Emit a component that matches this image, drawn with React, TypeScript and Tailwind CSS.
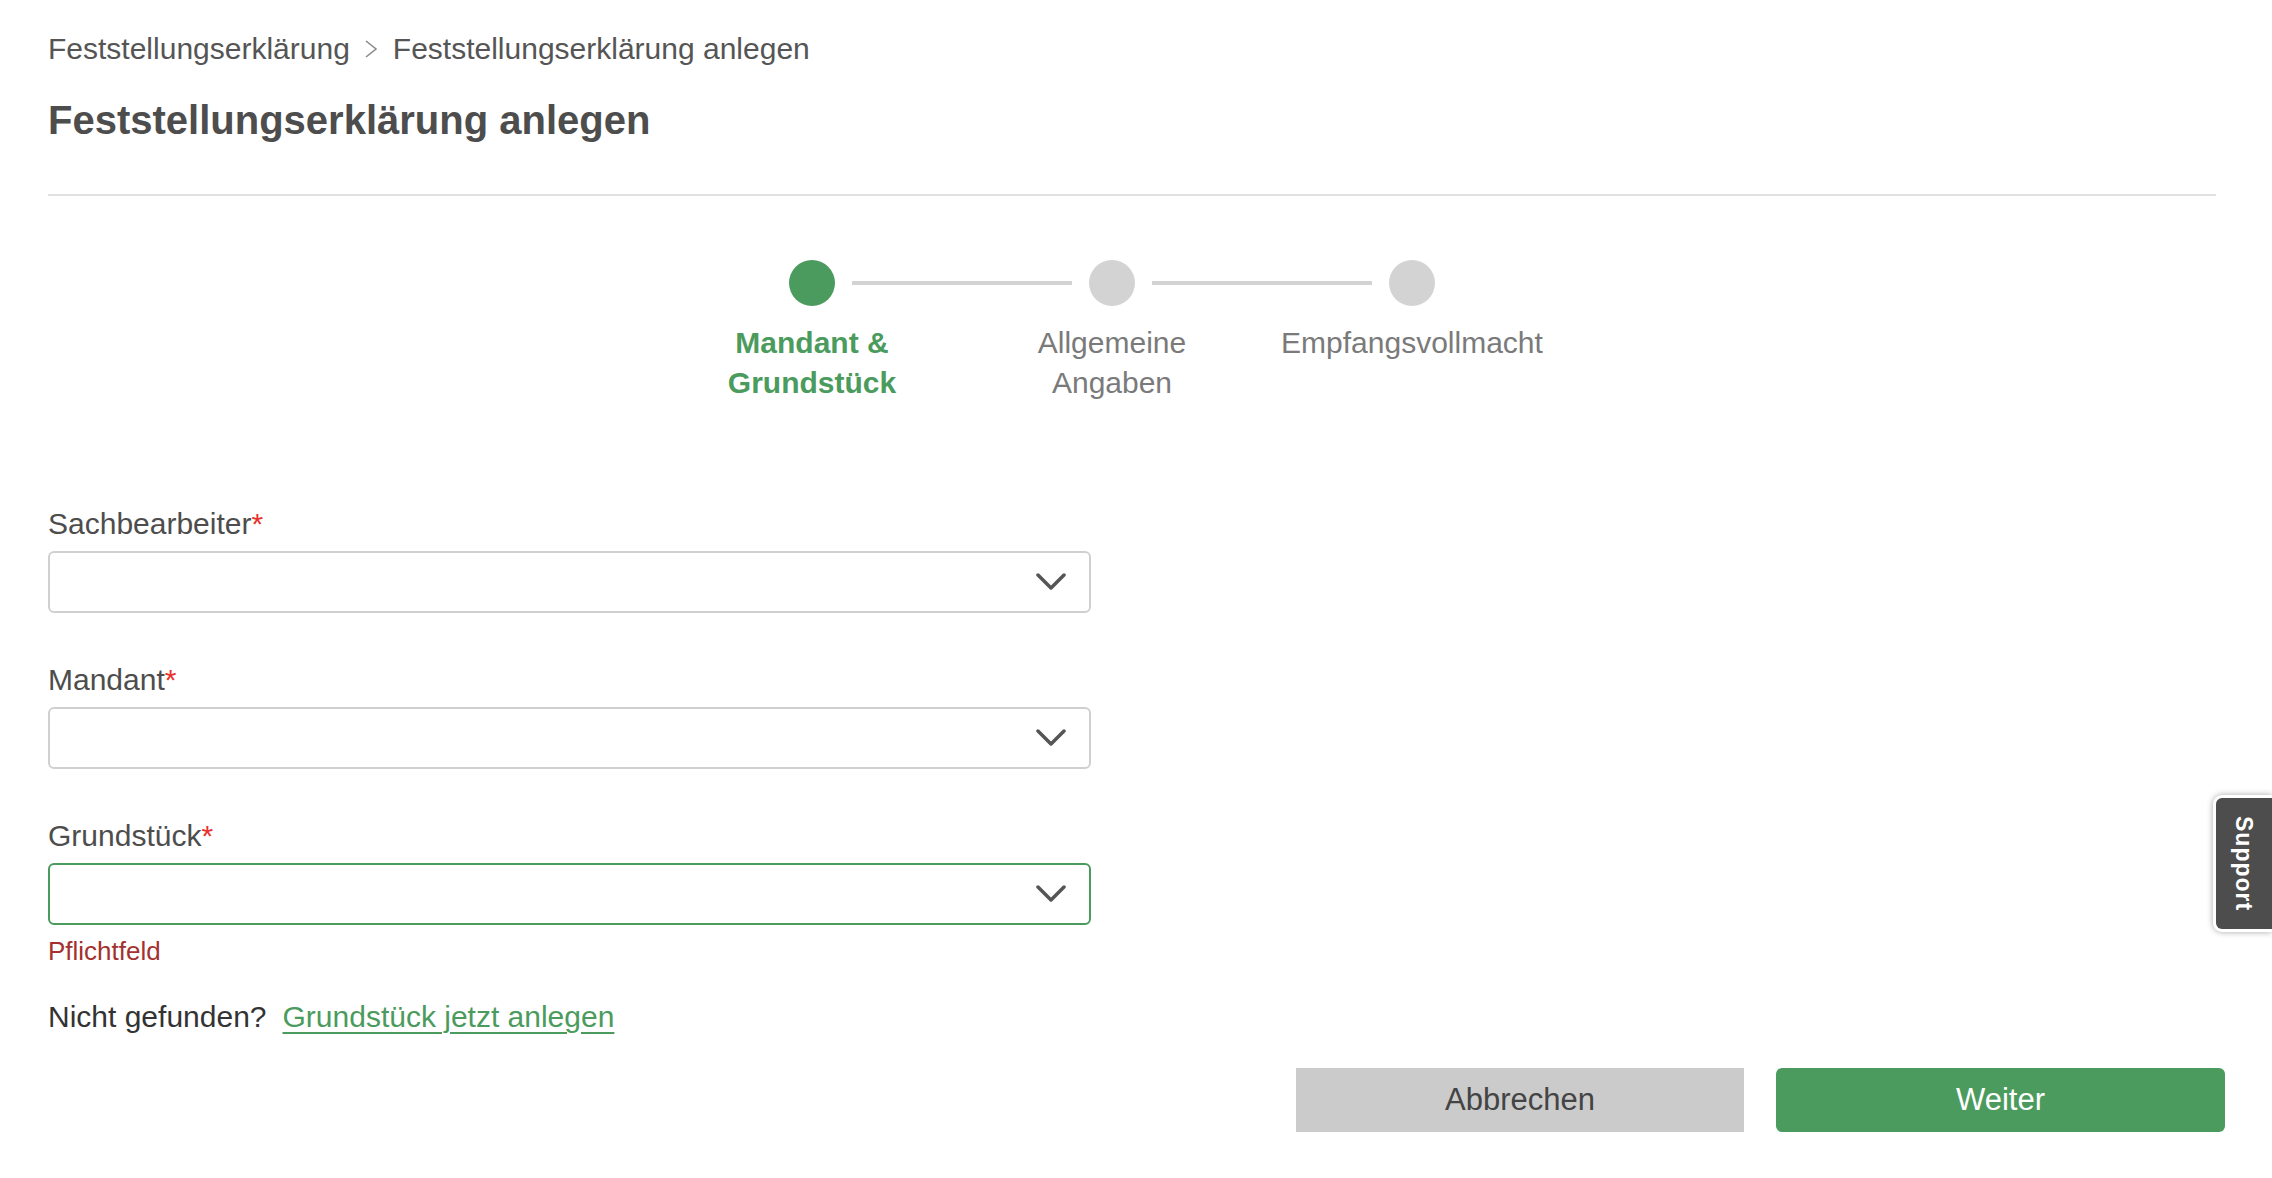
import React from "react";

const steps = [
  { label: "Mandant & Grundstück", active: true },
  { label: "Allgemeine Angaben", active: false },
  { label: "Empfangsvollmacht", active: false },
];

const fields = [
  { label: "Sachbearbeiter", focused: false, error: false },
  { label: "Mandant", focused: false, error: false },
  { label: "Grundstück", focused: true, error: true },
];

const Chevron = () => (
  <svg width="30" height="18" viewBox="0 0 30 18" fill="none">
    <path
      d="M2 2 L15 15 L28 2"
      stroke="#555555"
      strokeWidth="3.5"
      strokeLinecap="round"
      strokeLinejoin="round"
    />
  </svg>
);

const SelectField = ({
  label,
  focused,
  error,
}: {
  label: string;
  focused: boolean;
  error: boolean;
}) => (
  <div className="flex flex-col">
    <label className="h-[40px] text-[30px] leading-[40px] text-[#4d4d4d]">
      {label}
      <span className="text-[#e8322a]">*</span>
    </label>
    <div
      className={
        focused
          ? "mt-[7px] flex h-[62px] w-[1043px] items-center justify-end rounded-[6px] border-2 border-[#4b9b5e] bg-white pr-[23px]"
          : "mt-[7px] flex h-[62px] w-[1043px] items-center justify-end rounded-[6px] border-2 border-[#d0d0d0] bg-white pr-[23px]"
      }
    >
      <Chevron />
    </div>
    {error && (
      <p className="mt-[10px] text-[26px] leading-[32px] text-[#a3312f]">
        Pflichtfeld
      </p>
    )}
  </div>
);

const Stepper = () => (
  <div className="flex flex-col">
    <div className="mt-[64px] flex items-center pl-[741px]">
      {steps.map((step, i) => (
        <React.Fragment key={step.label}>
          <div
            className={
              step.active
                ? "h-[46px] w-[46px] shrink-0 rounded-full bg-[#4b9b5e]"
                : "h-[46px] w-[46px] shrink-0 rounded-full bg-[#d3d3d3]"
            }
          />
          {i < steps.length - 1 && (
            <div className="mx-[17px] h-[4px] w-[220px] bg-[#d3d3d3]" />
          )}
        </React.Fragment>
      ))}
    </div>
    <div className="mt-[17px] flex pl-[614px]">
      {steps.map((step) => (
        <div key={step.label} className="flex w-[300px] justify-center">
          <span
            className={
              step.active
                ? "max-w-[270px] text-center text-[30px] font-bold leading-[40px] text-[#4b9b5e]"
                : "max-w-[270px] text-center text-[30px] leading-[40px] text-[#7a7a7a]"
            }
          >
            {step.label}
          </span>
        </div>
      ))}
    </div>
  </div>
);

export default function App() {
  return (
    <div className="relative min-h-screen bg-white pl-[48px] pr-[56px] font-['Liberation_Sans',Arial,sans-serif]">
      {/* breadcrumb */}
      <nav className="flex items-center pt-[29px] text-[30px] leading-[40px] text-[#555555]">
        <span>Feststellungserklärung</span>
        <svg className="ml-[14px]" width="14" height="18" viewBox="0 0 14 18" fill="none">
          <path d="M2 1 L12 9 L2 17" stroke="#8a8a8a" strokeWidth="1.6" />
        </svg>
        <span className="ml-[15px]">Feststellungserklärung anlegen</span>
      </nav>

      <h1 className="mt-[27px] text-[40px] font-bold leading-[48px] text-[#4d4d4d]">
        Feststellungserklärung anlegen
      </h1>

      <div className="mt-[50px] h-[2px] bg-[#e0e0e0]" />

      <Stepper />

      {/* form */}
      <div className="mt-[101px] flex flex-col gap-[47px]">
        {fields.map((f) => (
          <SelectField key={f.label} {...f} />
        ))}
      </div>

      <p className="mt-[30px] text-[30px] leading-[40px] text-[#333333]">
        Nicht gefunden?
        <a
          href="#"
          className="ml-[16px] text-[#4b9b5e] underline decoration-2 underline-offset-[5px]"
        >
          Grundstück jetzt anlegen
        </a>
      </p>

      <div className="-mr-[9px] mt-[31px] flex justify-end gap-[32px]">
        <button className="h-[64px] w-[448px] bg-[#cbcbcb] text-[31px] text-[#444444]">
          Abbrechen
        </button>
        <button className="h-[64px] w-[449px] rounded-[6px] bg-[#4b9b5e] text-[31px] text-white">
          Weiter
        </button>
      </div>

      {/* support tab */}
      <div className="absolute right-0 top-[795px] flex h-[137px] w-[59px] items-center justify-center rounded-l-[9px] border-y-[3px] border-l-[3px] border-white bg-[#4d4d4d] shadow-[0_0_6px_rgba(0,0,0,0.35)]">
        <span className="text-[23px] font-bold tracking-[1px] text-white [writing-mode:vertical-rl]">
          Support
        </span>
      </div>
    </div>
  );
}
